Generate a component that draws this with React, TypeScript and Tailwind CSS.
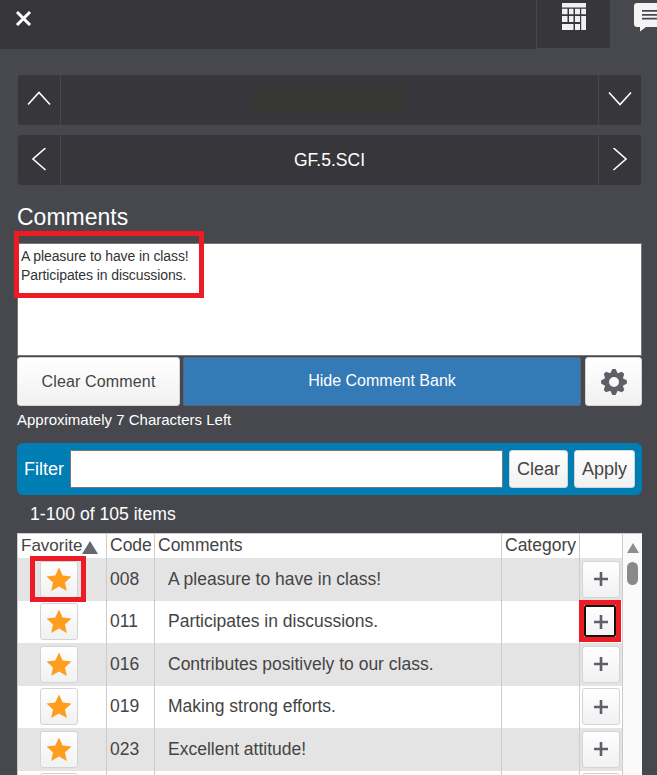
import React from "react";

const rows = [
  ["008", "A pleasure to have in class!"],
  ["011", "Participates in discussions."],
  ["016", "Contributes positively to our class."],
  ["019", "Making strong efforts."],
  ["023", "Excellent attitude!"],
  ["", ""],
];

const Chevron = ({ d }: { d: string }) => (
  <svg width="24" height="24" viewBox="0 0 24 24" fill="none" stroke="#ffffff" strokeWidth="1.6">
    <path d={d} />
  </svg>
);

const NavRow = ({ left, right, children }: { left: string; right: string; children?: React.ReactNode }) => (
  <div className="flex h-[50px] bg-[#37363b] rounded-[2px]">
    <div className="w-[43px] flex items-center justify-center border-r border-[#47484d]"><Chevron d={left} /></div>
    <div className="flex-1 flex items-center justify-center">{children}</div>
    <div className="w-[43px] flex items-center justify-center border-l border-[#47484d]"><Chevron d={right} /></div>
  </div>
);

const Star = () => (
  <svg width="26" height="25" viewBox="0 0 26 25">
    <path fill="#ff9d1e" d="M13 0.5l3.700 8 8.800 1-6.500 5.900 1.800 8.600-7.800-4.400-7.800 4.400 1.800-8.600L.5 9.500l8.800-1z" />
  </svg>
);

const Plus = () => (
  <svg width="14" height="14" viewBox="0 0 14 14">
    <path fill="#5f5f68" d="M5.700 0h2.600v5.700H14v2.600H8.300V14H5.700V8.300H0V5.700h5.700z" />
  </svg>
);

const gearPath = (() => {
  const pts: string[] = [];
  const at = (deg: number, r: number) => {
    const a = (deg * Math.PI) / 180;
    return `${(13 + r * Math.sin(a)).toFixed(2)} ${(13 - r * Math.cos(a)).toFixed(2)}`;
  };
  for (let k = 0; k < 8; k++) {
    const c = k * 45;
    pts.push(at(c - 7, 13), at(c + 7, 13), at(c + 22.5, 9.6));
  }
  return `M${pts.join("L")}ZM13 8a5 5 0 1 0 0 10a5 5 0 1 0 0-10Z`;
})();

const btn = "bg-gradient-to-b from-white to-[#f1f1f1] border border-[#d4d4d4] rounded-[3px] flex items-center justify-center";
const cols = "grid grid-cols-[89px_48px_347px_78px_43px]";

export default function App() {
  return (
    <div className="relative h-[775px] w-[657px] overflow-hidden bg-[#47484d] font-['Liberation_Sans',Arial,sans-serif] text-[#444444]">
      <div className="flex h-[49px]">
        <div className="w-[537px] bg-[#37363b] pl-[15px] pt-[11px] border-r border-[#47484d]">
          <svg width="17" height="15" viewBox="0 0 17 15" fill="none" stroke="#fff" strokeWidth="3"><path d="M2 1l13 13M15 1L2 14" /></svg>
        </div>
        <div className="w-[73px] h-[48px] bg-[#37363b] flex justify-center pt-[3px]">
          <svg width="24" height="27" viewBox="0 0 24 27" fill="#f0f0f0">
            <path d="M0 0h24v4.500H0zM0 5.700h5.500v5.500H0zM7 5.700h4.500v5.500H7zM13 5.700h5v5.500h-5zM19.200 5.700H24v5.500h-4.800zM0 13h5.500v6H0zM7 13h4.500v6H7zM13 13h5v6h-5zM0 21h11.500v6H0zM13 21h5v6h-5zM19.200 13H24v14h-4.800z" />
          </svg>
        </div>
        <div className="flex-1 pl-[24px] pt-[3px] overflow-hidden">
          <svg width="40" height="29" viewBox="0 0 40 29">
            <path fill="#f4f4f4" d="M3 0h34v24H12l-6 4.500V24H3a3 3 0 0 1-3-3V3a3 3 0 0 1 3-3z" />
            <path fill="#47484d" d="M8 7h20v1.800H8zM8 11h20v1.800H8zM8 14.700h20v1.800H8z" />
          </svg>
        </div>
      </div>

      <div className="pt-[26px] pl-[18px] pr-[16px] flex flex-col gap-[10px]">
        <NavRow left="M1 16.500L12 4.500l11 12" right="M1 4.500L12 16.500 23 4.500">
          <div className="w-[155px] h-[30px] bg-[#363635] mr-[3px] mb-[2px]" />
        </NavRow>
        <NavRow left="M18.500 0L6 11l12.500 11" right="M5.500 0L18 11 5.500 22">
          <span className="text-white text-[17.5px]">GF.5.SCI</span>
        </NavRow>
      </div>

      <div className="pl-[17px] pr-[15px]">
        <h2 className="mt-[19px] h-[39px] text-white text-[23px] leading-[26px] font-normal">Comments</h2>
        <div className="h-[113px] bg-white border border-[#77777b] px-[3px] pt-[3px] text-[14px] tracking-[-0.1px] leading-[19px] text-[#333]">
          <div>A pleasure to have in class!</div>
          <div>Participates in discussions.</div>
        </div>
        <div className="flex mt-[1px] h-[49px]">
          <div className={`${btn} w-[163px] text-[16px] tracking-[0.15px] text-[#444]`}>Clear Comment</div>
          <div className="ml-[3px] w-[398px] bg-[#337ab7] border border-[#5a6672] rounded-[2px] flex items-center justify-center text-white text-[16px] pb-[1px]">Hide Comment Bank</div>
          <div className={`${btn} ml-[4px] w-[57px]`}>
            <svg width="26" height="26" viewBox="0 0 26 26">
              <path fill="#5f5f68" fillRule="evenodd" d={gearPath} />
            </svg>
          </div>
        </div>
        <div className="mt-[5px] h-[32px] text-white text-[15px] leading-[18px]">Approximately 7 Characters Left</div>

        <div className="h-[52px] bg-[#007db3] rounded-[6px] flex items-center pl-[7px] pr-[7px]">
          <span className="w-[46px] text-white text-[18px]">Filter</span>
          <div className="w-[433px] h-[38px] bg-white border border-[#777] rounded-[1px]" />
          <div className={`${btn} ml-[6px] w-[59px] h-[38px] text-[18px]`}>Clear</div>
          <div className={`${btn} ml-[6px] w-[61px] h-[38px] text-[18px]`}>Apply</div>
        </div>
        <div className="h-[38px] pl-[13px] pt-[9px] text-white text-[17.6px] leading-[20px]">1-100 of 105 items</div>

        <div className="flex bg-white border-t border-l border-[#cccccc]">
          <div className="w-[605px]">
            <div className={`${cols} h-[24px] text-[17.5px] leading-[22px] bg-white`}>
              <div className="border-r border-[#cccccc] pl-[3px] flex items-center"><span className="text-[17px]">Favorite</span>
                <svg width="16" height="13" viewBox="0 0 16 13" className="mt-[2px]"><path fill="#66666e" d="M8 0l8 13H0z" /></svg>
              </div>
              <div className="border-r border-[#cccccc] pl-[3px]">Code</div>
              <div className="border-r border-[#cccccc] pl-[3px]">Comments</div>
              <div className="border-r border-[#cccccc] pl-[3px]">Category</div>
              <div className="border-r border-[#cccccc]" />
            </div>
            {rows.map(([code, text], i) => (
              <div key={i} className={`${cols} h-[42.5px] text-[17.5px] ${i % 2 === 0 ? "bg-[#e4e4e4]" : "bg-white"}`}>
                <div className="border-r border-[#cccccc] flex items-center justify-center pr-[7px]">
                  <div className={`${btn} w-[38px] h-[37px]`}><Star /></div>
                </div>
                <div className="border-r border-[#cccccc] pl-[3px] pb-[1px] flex items-center">{code}</div>
                <div className="border-r border-[#cccccc] pl-[13px] pb-[1px] flex items-center">{text}</div>
                <div className="border-r border-[#cccccc]" />
                <div className="border-r border-[#cccccc] flex items-center justify-center">
                  <div className={`${btn} w-[38px] h-[37px]`}><Plus /></div>
                </div>
              </div>
            ))}
          </div>
          <div className="w-[19px] bg-[#fafafa] flex flex-col items-center pt-[9px]">
            <svg width="12" height="10" viewBox="0 0 12 10"><path fill="#8e8e8e" d="M6 0l6 10H0z" /></svg>
            <div className="w-[11px] h-[23px] mt-[9px] rounded-[6px] bg-[#8a8a8a]" />
          </div>
        </div>
      </div>

      <div className="absolute left-[14px] top-[231px] w-[190px] h-[67px] border-[5px] border-[#ed1c24]" />
      <div className="absolute left-[30px] top-[556px] w-[56px] h-[46px] border-[5px] border-[#ed1c24]" />
      <div className="absolute left-[579px] top-[600px] w-[42px] h-[42px] border-[5px] border-[#ed1c24]">
        <div className="w-full h-full border-2 border-[#111] rounded-[2px]" />
      </div>
    </div>
  );
}
